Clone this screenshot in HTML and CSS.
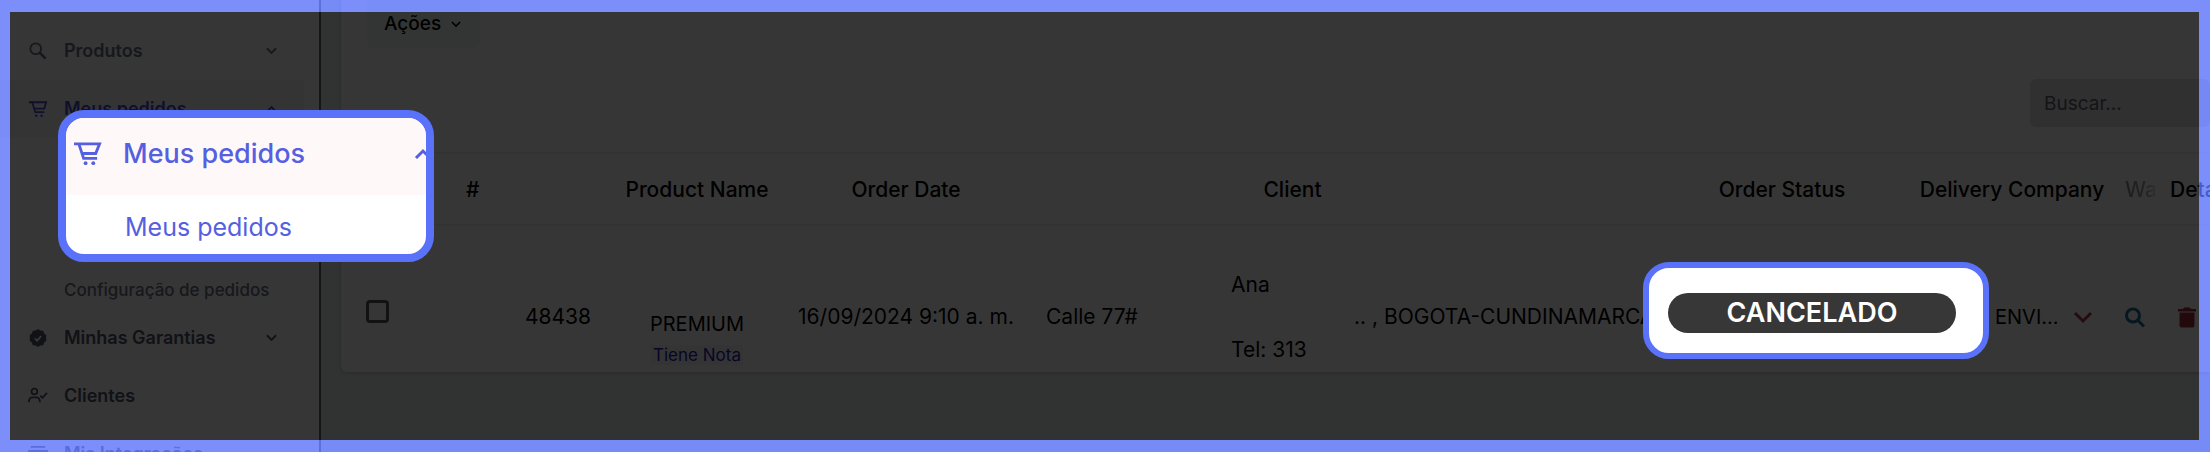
FILE: index.html
```html
<!DOCTYPE html>
<html lang="pt">
<head>
<meta charset="utf-8">
<title>Meus pedidos</title>
<link rel="stylesheet" href="styles.css">
</head>
<body>
<div class="app">
  <nav class="sidebar">
    <a class="item" href="#">
      <svg class="icon" viewBox="0 0 20 20"><circle cx="7.500" cy="7.500" r="6"/><path d="M12 12l6.500 6.500" stroke-width="3"/></svg>
      <span class="label">Produtos</span>
      <svg class="chev" viewBox="0 0 12 8"><path d="M1 1l5 5 5-5"/></svg>
    </a>
    <a class="item active" href="#">
      <svg class="icon" viewBox="0 0 20 18"><path d="M0 1.500h3.500l3.500 11h10M4 1.500h15l-2 7H6"/><circle class="dot" cx="8" cy="16.500" r="1.400"/><circle class="dot" cx="14" cy="16.500" r="1.400"/></svg>
      <span class="label">Meus pedidos</span>
      <svg class="chev" viewBox="0 0 12 8"><path d="M1 7l5-5 5 5"/></svg>
    </a>
    <div class="submenu"><a class="subitem" href="#">Configuração de pedidos</a></div>
    <a class="item dark" href="#">
      <svg class="icon" viewBox="0 0 20 20"><path class="fill" d="M10 0l2.600 1.800 3.100.2 1.200 2.900 2.400 2L19 10l.3 3.100-2.400 2-1.200 2.900-3.100.2L10 20l-2.600-1.800-3.100-.2-1.200-2.900-2.400-2L1 10 .7 6.900l2.400-2L4.300 2l3.100-.2z"/><path class="tick" d="M6.500 10.500l2.500 2.500 4.500-5"/></svg>
      <span class="label">Minhas Garantias</span>
      <svg class="chev" viewBox="0 0 12 8"><path d="M1 1l5 5 5-5"/></svg>
    </a>
    <a class="item dark" href="#">
      <svg class="icon" viewBox="0 0 20 20"><circle cx="6" cy="5" r="3.200"/><path d="M0 17v-1.500a4 4 0 0 1 4-4h4a4 4 0 0 1 4 4V17M12.500 9.500l2.500 2.500 5-5.500"/></svg>
      <span class="label">Clientes</span>
    </a>
    <a class="item dark" href="#">
      <svg class="icon" viewBox="0 0 20 20"><path d="M2 2h16M0 6.500h20V19H0zM4 7v12M8 7v12M12 7v12M16 7v12"/></svg>
      <span class="label">Mis Integrações</span>
    </a>
  </nav>
  <main class="main">
    <section class="card">
      <div class="toolbar"><button class="actions" type="button">Ações <svg class="chev small" viewBox="0 0 12 8"><path d="M1 1l5 5 5-5"/></svg></button></div>
      <div class="filters"><input class="search" type="search" placeholder="Buscar..." aria-label="Buscar"></div>
      <table class="orders">
        <colgroup><col class="c-check"><col class="c-num"><col class="c-product"><col class="c-date"><col class="c-address"><col class="c-client"><col class="c-city"><col class="c-status"><col class="c-delivery"><col class="c-icon"><col></colgroup>
        <thead><tr><th></th><th class="num-head">#</th><th>Product Name</th><th>Order Date</th><th></th><th>Client</th><th></th><th>Order Status</th><th>Delivery Company</th><th class="faded">Wa</th><th class="left">Details</th></tr></thead>
        <tbody><tr>
          <td class="check-cell"><input class="check" type="checkbox" aria-label="Selecionar pedido 48438"></td>
          <td class="num">48438</td>
          <td class="center product">PREMIUM<br><a class="note" href="#">Tiene Nota</a></td>
          <td class="center">16/09/2024 9:10 a. m.</td>
          <td class="address">Calle 77#</td>
          <td class="client"><p>Ana</p><p>Tel: 313</p></td>
          <td>.. , BOGOTA-CUNDINAMARCA</td>
          <td></td>
          <td class="delivery"><div class="carrier"><span>ENVI...</span><svg class="more" viewBox="0 0 18 12"><path d="M1 2l8 8 8-8"/></svg></div></td>
          <td class="icon-cell"><button class="icon-btn" type="button" aria-label="Ver"><svg class="lens" viewBox="0 0 20 20"><circle cx="8" cy="8" r="6.500"/><path d="M13 13l6 6"/></svg></button></td>
          <td class="trash-cell"><button class="icon-btn" type="button" aria-label="Excluir"><svg class="trash" viewBox="0 0 18 20"><path d="M0 1.500h5L6 0h6l1 1.500h5V4H0zM1.500 5h15v13a2 2 0 0 1-2 2h-11a2 2 0 0 1-2-2z"/></svg></button></td>
        </tr></tbody>
      </table>
    </section>
  </main>
</div>
<div class="shade"></div>
<div class="frame"></div>
<div class="callout callout-menu">
  <div class="zoom-head">
    <svg class="cart" viewBox="0 0 28 24"><path d="M0 1.500h5l5 15h14M5.500 1.500h21l-4 10H8"/><circle class="dot" cx="12" cy="21.500" r="2"/><circle class="dot" cx="20" cy="21.500" r="2"/></svg>
    <span class="zoom-title">Meus pedidos</span>
    <svg class="zoom-chev" viewBox="0 0 16 10"><path d="M1 9l7-7 7 7"/></svg>
  </div>
  <div class="zoom-sub">Meus pedidos</div>
</div>
<div class="callout callout-status"><span class="pill">CANCELADO</span></div>
</body>
</html>
```
FILE: styles.css
```css
* { box-sizing: border-box; }
body { margin: 0; height: 100vh; overflow: hidden; position: relative; font-family: Inter, "Liberation Sans", sans-serif; font-size: 21px; line-height: 24px; color: #000; background: #e8f1ee; }
a { color: inherit; text-decoration: none; }
svg { fill: none; stroke: currentColor; flex: none; overflow: visible; }
.dot, .fill { fill: currentColor; stroke: none; }
.app { display: flex; height: 100%; overflow: hidden; }
.sidebar { flex: none; width: 321px; padding-top: 22px; border-right: 2px solid #666; background: #fff; color: #6c7184; }
.item { display: flex; align-items: center; height: 58px; margin-right: 15px; padding: 0 27px 0 29px; font-size: 18px; font-weight: 600; }
.item.dark { color: #50546a; }
.item.active { color: #4a50d0; background: #faf6f6; border-radius: 4px; }
.icon { width: 18px; height: 18px; margin-right: 17px; stroke-width: 2; }
.tick { stroke: #fff; stroke-width: 2; }
.label { flex: 1; white-space: nowrap; }
.chev { width: 11px; height: 8px; stroke-width: 2; }
.chev.small { width: 10px; height: 7px; margin-left: 10px; }
.submenu { padding: 143px 0 9px 64px; font-size: 17px; font-weight: 500; line-height: 19px; }
.subitem { white-space: nowrap; }
.main { flex: 1; min-width: 0; padding-left: 20px; }
.card { background: #fff; border-radius: 0 0 0 6px; box-shadow: 0 1px 4px #bbb; }
.toolbar { height: 79px; padding-left: 26px; }
.actions { display: flex; align-items: center; height: 48px; width: 113px; border: 0; border-radius: 0 0 6px 6px; padding: 0 0 0 17px; background: #f2f8f5; font: inherit; font-weight: 500; font-size: 19px; }
.filters { display: flex; justify-content: flex-end; height: 73px; }
.search { width: 180px; height: 48px; padding: 0 14px; border: 0; border-radius: 6px; background: #e0e0e0; font: inherit; font-size: 19px; }
.search::placeholder { color: #60606e; }
.orders { width: 100%; table-layout: fixed; border-collapse: collapse; white-space: nowrap; }
.c-check { width: 80px; }
.c-num { width: 191px; }
.c-product { width: 170px; }
.c-date { width: 248px; }
.c-address { width: 201px; }
.c-client { width: 123px; }
.c-city { width: 298px; }
.c-status { width: 260px; }
.c-delivery { width: 200px; }
.c-icon { width: 58px; }
th { height: 72px; padding: 1px 0 0; border-top: 2px solid #f2f2f2; border-bottom: 2px solid #f2f2f2; font-size: 21px; font-weight: 500; }
td { height: 147px; padding: 36px 0 0; }
.num-head { text-align: left; padding-left: 45px; }
.left { text-align: left; }
.faded { color: transparent; background: linear-gradient(90deg, #777 0, #aaa 35px, #fff 48px); -webkit-background-clip: text; background-clip: text; text-align: left; padding-left: 13px; }
.check-cell { padding: 24px 0 0 25px; }
.check { appearance: none; display: block; width: 23px; height: 23px; margin: 0; border: 3px solid #555; border-radius: 4px; }
.num { text-align: right; padding-right: 21px; }
.center { text-align: center; }
.product { line-height: 30px; padding-top: 80px; font-size: 20px; }
.note { padding: 0 2px; background: #f3f3fb; color: #2a20b0; font-size: 17px; }
.address { padding-left: 16px; }
.client p { margin: 0; }
.client p + p { margin-top: 41px; }
.delivery { padding-left: 83px; }
.carrier { display: flex; align-items: center; justify-content: space-between; width: 97px; font-size: 20px; }
.more { width: 18px; height: 12px; stroke: #a83c4a; stroke-width: 3; }
.icon-cell { padding-left: 13px; }
.trash-cell { padding-left: 8px; }
.icon-btn { display: block; padding: 0; border: 0; background: none; }
.icon-btn svg { display: block; width: 20px; height: 21px; }
.lens { stroke: #206c98; stroke-width: 3; }
.icon-btn .trash { width: 18px; fill: #a0303a; stroke: none; }
.shade { position: absolute; inset: 12px 11px 12px 10px; background: rgba(0, 0, 0, .79); }
.frame { position: absolute; inset: 0; border: solid rgba(90, 114, 249, .8); border-width: 12px 11px 12px 10px; }
.callout { position: absolute; overflow: hidden; border: 8px solid #5a72f9; border-radius: 26px; background: #fff; color: #5560e0; }
.callout-menu { left: 58px; top: 110px; width: 376px; height: 152px; }
.zoom-head { display: flex; align-items: center; height: 77px; padding: 0 0 6px 8px; background: #fff8f8; white-space: nowrap; }
.cart { width: 27px; height: 24px; margin-right: 22px; stroke-width: 3; }
.zoom-title { flex: none; width: 292px; font-size: 27px; font-weight: 500; }
.zoom-chev { width: 16px; height: 10px; stroke-width: 3; }
.zoom-sub { padding: 20px 0 0 59px; font-size: 25px; }
.callout-status { left: 1643px; top: 262px; width: 346px; height: 97px; padding: 25px 27px 0 19px; border-width: 6px; }
.pill { display: flex; align-items: center; justify-content: center; height: 40px; border-radius: 20px; background: #373737; color: #fff; font-size: 27px; font-weight: 600; }
```
